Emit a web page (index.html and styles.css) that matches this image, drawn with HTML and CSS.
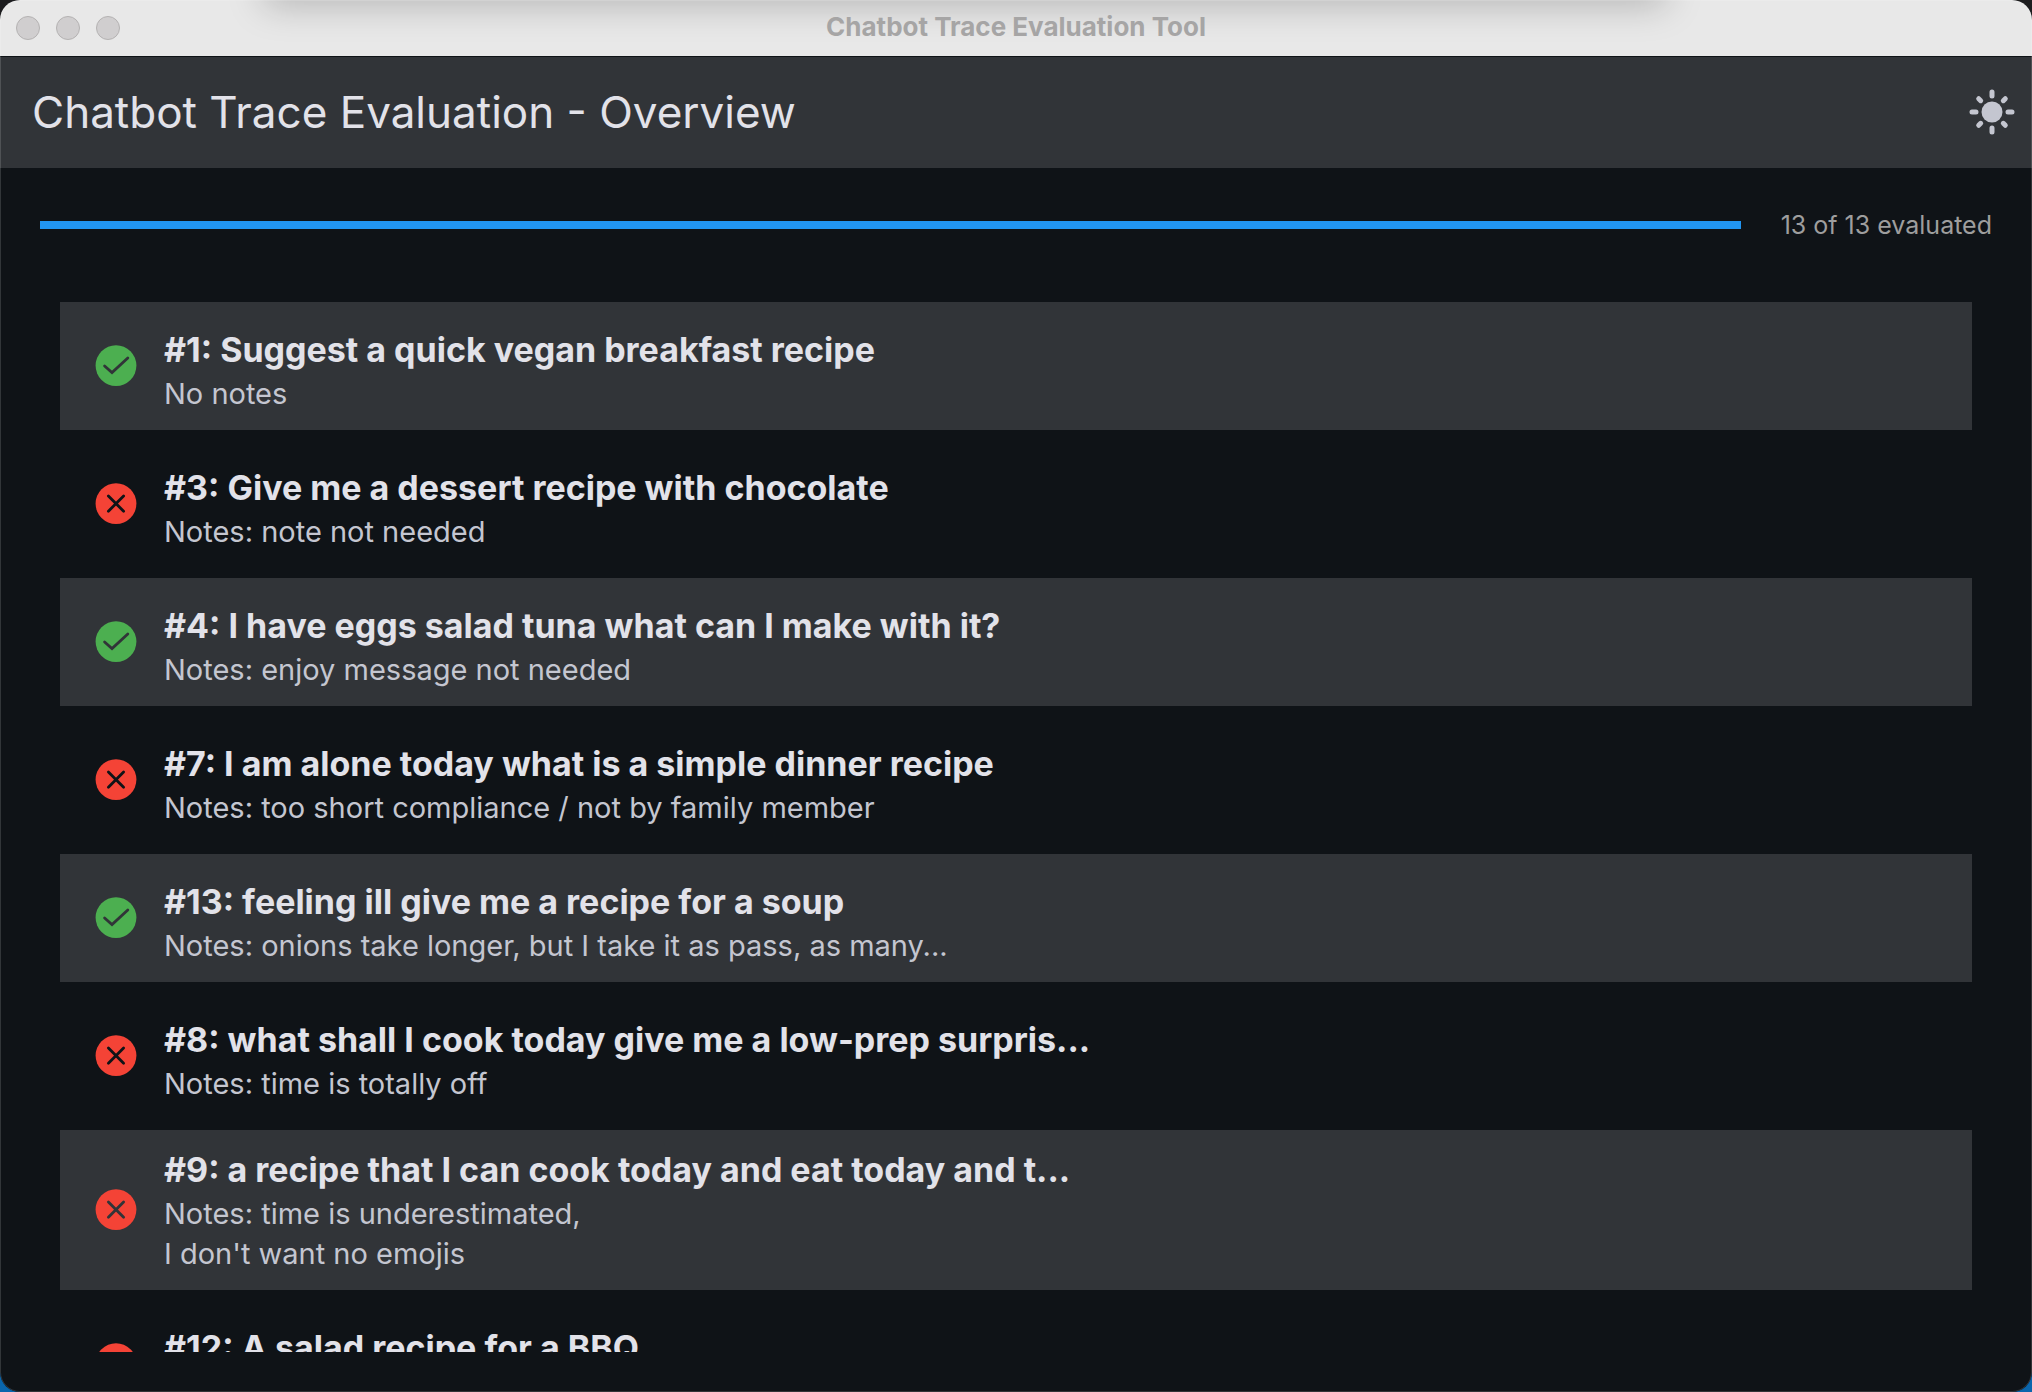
FILE: index.html
```html
<!DOCTYPE html>
<html lang="en">
<head>
<meta charset="utf-8">
<title>Chatbot Trace Evaluation Tool</title>
<link rel="stylesheet" href="styles.css">
</head>
<body>
<svg class="defs" width="0" height="0" aria-hidden="true">
  <symbol id="pass" viewBox="0 0 24 24">
    <circle class="pass-fill" cx="12" cy="11.800" r="10.200"/>
    <path class="mark" d="M6.300 12L10 15.300L17.900 8"/>
  </symbol>
  <symbol id="fail" viewBox="0 0 24 24">
    <circle class="fail-fill" cx="12" cy="11.800" r="10.200"/>
    <path class="mark" d="M8.200 8l7.600 7.600M15.800 8l-7.600 7.600"/>
  </symbol>
</svg>
<div class="window">
  <div class="titlebar">
    <div class="lights">
      <button class="light" type="button" aria-label="Close"></button>
      <button class="light" type="button" aria-label="Minimize"></button>
      <button class="light" type="button" aria-label="Zoom"></button>
    </div>
    <div class="window-title">Chatbot Trace Evaluation Tool</div>
  </div>
  <header class="appbar">
    <h1 class="page-title">Chatbot Trace Evaluation - Overview</h1>
    <button class="theme-toggle" type="button" aria-label="Toggle theme">
      <svg class="sun" viewBox="0 0 48 48" aria-hidden="true">
        <circle cx="24" cy="24" r="10.500" fill="currentColor"/>
        <path d="M24 4v4M24 40v4M4 24h4M40 24h4M10.700 10.700l2 2M35.300 35.300l2 2M37.300 10.700l-2 2M12.700 35.300l-2 2" fill="none" stroke="currentColor" stroke-width="5" stroke-linecap="round"/>
      </svg>
    </button>
  </header>
  <main class="content">
    <div class="progress-row">
      <progress class="progress" id="evaluated" value="13" max="13"></progress>
      <label class="progress-label" for="evaluated">13 of 13 evaluated</label>
    </div>
    <ul class="traces">
      <li class="trace trace-alt">
        <svg class="status" role="img" aria-label="Pass"><use href="#pass"/></svg>
        <div class="trace-text">
          <h2 class="trace-title">#1: Suggest a quick vegan breakfast recipe</h2>
          <p class="trace-notes">No notes</p>
        </div>
      </li>
      <li class="trace">
        <svg class="status" role="img" aria-label="Fail"><use href="#fail"/></svg>
        <div class="trace-text">
          <h2 class="trace-title">#3: Give me a dessert recipe with chocolate</h2>
          <p class="trace-notes">Notes: note not needed</p>
        </div>
      </li>
      <li class="trace trace-alt">
        <svg class="status" role="img" aria-label="Pass"><use href="#pass"/></svg>
        <div class="trace-text">
          <h2 class="trace-title">#4: I have eggs salad tuna what can I make with it?</h2>
          <p class="trace-notes">Notes: enjoy message not needed</p>
        </div>
      </li>
      <li class="trace">
        <svg class="status" role="img" aria-label="Fail"><use href="#fail"/></svg>
        <div class="trace-text">
          <h2 class="trace-title">#7: I am alone today what is a simple dinner recipe</h2>
          <p class="trace-notes">Notes: too short compliance / not by family member</p>
        </div>
      </li>
      <li class="trace trace-alt">
        <svg class="status" role="img" aria-label="Pass"><use href="#pass"/></svg>
        <div class="trace-text">
          <h2 class="trace-title">#13: feeling ill give me a recipe for a soup</h2>
          <p class="trace-notes">Notes: onions take longer, but I take it as pass, as many...</p>
        </div>
      </li>
      <li class="trace">
        <svg class="status" role="img" aria-label="Fail"><use href="#fail"/></svg>
        <div class="trace-text">
          <h2 class="trace-title">#8: what shall I cook today give me a low-prep surpris...</h2>
          <p class="trace-notes">Notes: time is totally off</p>
        </div>
      </li>
      <li class="trace trace-alt">
        <svg class="status" role="img" aria-label="Fail"><use href="#fail"/></svg>
        <div class="trace-text">
          <h2 class="trace-title">#9: a recipe that I can cook today and eat today and t...</h2>
          <p class="trace-notes">Notes: time is underestimated,<br>I don't want no emojis</p>
        </div>
      </li>
      <li class="trace">
        <svg class="status" role="img" aria-label="Fail"><use href="#fail"/></svg>
        <div class="trace-text">
          <h2 class="trace-title">#12: A salad recipe for a BBQ</h2>
          <p class="trace-notes"></p>
        </div>
      </li>
    </ul>
  </main>
</div>
</body>
</html>
```
FILE: styles.css
```css
* {
  box-sizing: border-box;
}

body {
  margin: 0;
  background: linear-gradient(#1c1c1e 50%, #0a66ad 50%);
  font-family: Inter, "Liberation Sans", sans-serif;
  color: #e2e2e9;
}

.defs {
  position: absolute;
}

.window {
  position: relative;
  display: flex;
  flex-direction: column;
  height: 100vh;
  overflow: hidden;
  border-radius: 20px;
  background: #0f1317;
}

/* Hairline window edge, drawn over the content. */
.window::after {
  content: "";
  position: absolute;
  inset: 0;
  border: 1px solid #ffffff26;
  border-radius: 20px;
  pointer-events: none;
}

.titlebar {
  position: relative;
  display: grid;
  grid-template-columns: 1fr auto 1fr;
  align-items: center;
  flex: none;
  height: 57px;
  padding: 0 16px;
  border-bottom: 1px solid #0f1317;
  background: #e8e8e8;
}

.titlebar::before {
  content: "";
  position: absolute;
  top: -30px;
  left: 13%;
  right: 18%;
  height: 30px;
  box-shadow: 0 4px 36px #00000040;
}

.lights {
  display: flex;
  gap: 16px;
}

.light {
  width: 24px;
  height: 24px;
  padding: 0;
  border: 1px solid #b4b2b2;
  border-radius: 50%;
  background: #d0cecf;
}

.window-title {
  position: relative;
  padding-bottom: 2px;
  font-size: 26px;
  font-weight: 700;
  line-height: 32px;
  color: #a6a5a5;
}

.appbar {
  display: flex;
  align-items: center;
  justify-content: space-between;
  flex: none;
  height: 111px;
  padding: 0 16px 2px 32px;
  background: #313438;
}

.page-title {
  margin: 0;
  font-size: 44px;
  font-weight: 400;
  line-height: 56px;
}

.theme-toggle {
  display: flex;
  padding: 0;
  border: 0;
  background: none;
  color: #c4c6d0;
}

.sun {
  width: 48px;
  height: 48px;
}

.content {
  display: flex;
  flex-direction: column;
  flex: 1;
  min-height: 0;
  padding: 40px;
}

.progress-row {
  display: flex;
  align-items: center;
  gap: 40px;
  flex: none;
  height: 34px;
}

.progress {
  appearance: none;
  flex: 1;
  height: 8px;
  border: 0;
  background: #313438;
}

.progress::-webkit-progress-bar {
  background: #313438;
}

.progress::-webkit-progress-value {
  background: #2196f3;
}

.progress-label {
  font-size: 25px;
  line-height: 32px;
  color: #9e9e9e;
}

.traces {
  display: flex;
  flex-direction: column;
  gap: 10px;
  flex: 1;
  min-height: 0;
  margin: 60px 0 0;
  padding: 0 20px;
  overflow: hidden;
  list-style: none;
}

.trace {
  display: flex;
  align-items: center;
  gap: 24px;
  flex: none;
  min-height: 128px;
  padding: 16px 32px;
}

.trace-alt {
  background: #313438;
}

.status {
  flex: none;
  width: 48px;
  height: 48px;
  color: #0f1317;
}

.trace-alt .status {
  color: #313438;
}

.pass-fill {
  fill: #4caf50;
}

.fail-fill {
  fill: #f44336;
}

.mark {
  fill: none;
  stroke: currentColor;
  stroke-width: 1.4;
  stroke-linecap: round;
}

.trace-text {
  align-self: flex-end;
}

.trace-title {
  margin: 0;
  font-size: 34px;
  font-weight: 700;
  line-height: 48px;
}

.trace-notes {
  min-height: 40px;
  margin: 0;
  font-size: 29px;
  line-height: 40px;
  color: #c4c6d0;
}
```
